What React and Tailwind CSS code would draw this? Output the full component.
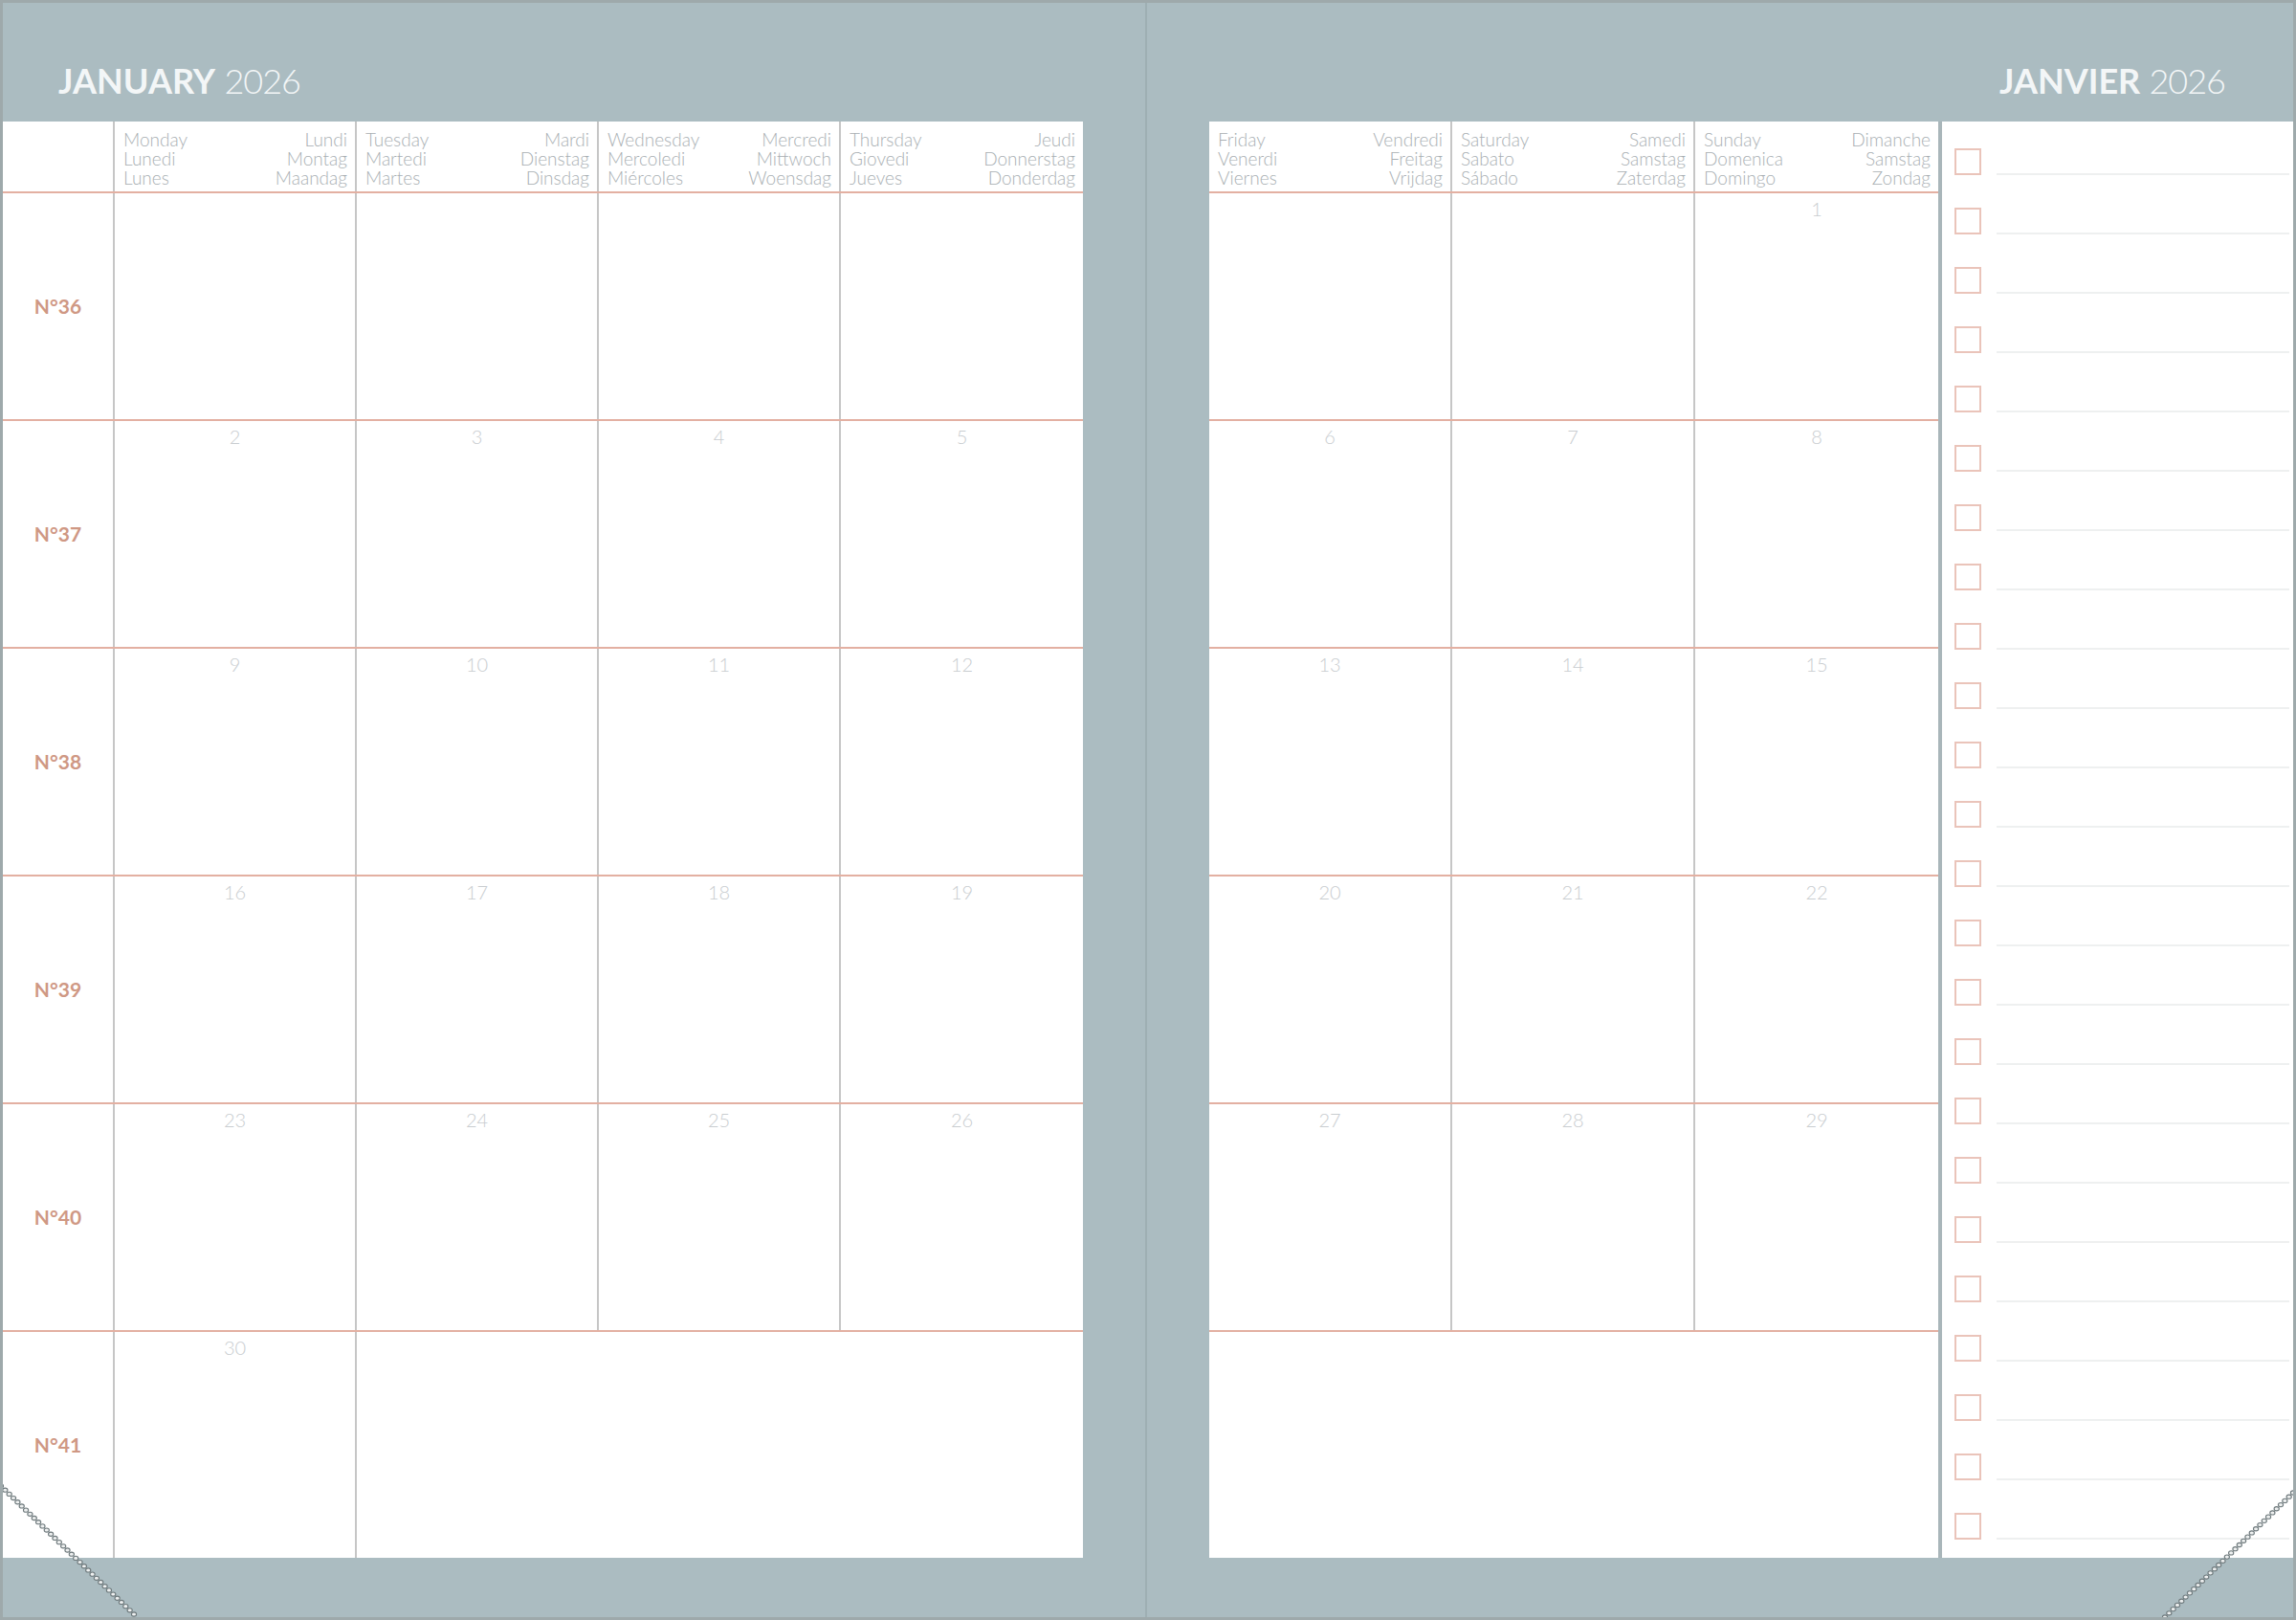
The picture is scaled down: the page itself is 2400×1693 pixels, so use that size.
import React from "react";

const leftDays = [
  { l: ["Monday", "Lunedi", "Lunes"], r: ["Lundi", "Montag", "Maandag"] },
  { l: ["Tuesday", "Martedi", "Martes"], r: ["Mardi", "Dienstag", "Dinsdag"] },
  { l: ["Wednesday", "Mercoledi", "Miércoles"], r: ["Mercredi", "Mittwoch", "Woensdag"] },
  { l: ["Thursday", "Giovedi", "Jueves"], r: ["Jeudi", "Donnerstag", "Donderdag"] },
];
const rightDays = [
  { l: ["Friday", "Venerdi", "Viernes"], r: ["Vendredi", "Freitag", "Vrijdag"] },
  { l: ["Saturday", "Sabato", "Sábado"], r: ["Samedi", "Samstag", "Zaterdag"] },
  { l: ["Sunday", "Domenica", "Domingo"], r: ["Dimanche", "Samstag", "Zondag"] },
];

const weeks = ["N°36", "N°37", "N°38", "N°39", "N°40", "N°41"];
const leftNums = [
  [null, null, null, null],
  [2, 3, 4, 5],
  [9, 10, 11, 12],
  [16, 17, 18, 19],
  [23, 24, 25, 26],
  [30, null, null, null],
];
const rightNums = [
  [null, null, 1],
  [6, 7, 8],
  [13, 14, 15],
  [20, 21, 22],
  [27, 28, 29],
  [null, null, null],
];

const VLINE = "border-r-2 border-[#c6c6c6]";
const HLINE = "border-b-2 border-[#e3b0a2]";

function DayHead({ d, w, border }) {
  return (
    <div
      className={`${w} h-full flex justify-between pl-[9px] pr-[8px] pt-[9px] text-[19px] leading-[20px] font-light text-[#a9afb3] ${border ? VLINE : ""}`}
    >
      <div className="flex flex-col">
        {d.l.map((t) => (
          <span key={t}>{t}</span>
        ))}
      </div>
      <div className="flex flex-col items-end">
        {d.r.map((t) => (
          <span key={t}>{t}</span>
        ))}
      </div>
    </div>
  );
}

function DayCell({ n, w, border }) {
  return (
    <div className={`${w} h-full flex justify-center pt-[6px] ${border ? VLINE : ""}`}>
      {n != null && (
        <span className="text-[20px] leading-[20px] font-light text-[#c9cdd0]">{n}</span>
      )}
    </div>
  );
}

function Chain({ x1, y1, x2, y2 }) {
  const len = Math.hypot(x2 - x1, y2 - y1);
  const n = Math.floor(len / 6);
  const pts = [];
  for (let i = 0; i <= n; i++) {
    const t = i / n;
    pts.push([x1 + (x2 - x1) * t, y1 + (y2 - y1) * t]);
  }
  return pts.map(([x, y], i) => (
    <ellipse key={i} cx={x} cy={y} rx="2.6" ry="2.1" fill="#eef0f0" stroke="#6f7a7d" strokeWidth="1.1" />
  ));
}

export default function App() {
  return (
    <div className="w-[2400px] h-[1693px] bg-[#abbcc1] border-[3px] border-[#9ea9ab] flex relative overflow-hidden font-['Lato',sans-serif]">
      {/* LEFT PAGE */}
      <div className="w-[1129px] flex flex-col">
        <div className="h-[124px] pl-[58px] pt-[63px]">
          <div className="text-[36px] leading-[36px] text-[#f3f6f7]">
            <span className="font-bold">JANUARY</span>{" "}
            <span className="font-light tracking-[-1px]">2026</span>
          </div>
        </div>
        <div className="flex-1 bg-white flex flex-col">
          <div className={`h-[75px] flex ${HLINE}`}>
            <div className={`w-[117px] h-full ${VLINE}`} />
            {leftDays.map((d, i) => (
              <DayHead key={i} d={d} w="w-[253px]" border={i < 3} />
            ))}
          </div>
          {weeks.map((wk, r) => (
            <div key={wk} className={`${r < 5 ? `h-[238px] ${HLINE}` : "flex-1"} flex`}>
              <div className={`w-[117px] h-full flex items-center justify-center ${VLINE}`}>
                <span className="text-[21px] font-bold text-[#cf9884]">{wk}</span>
              </div>
              {leftNums[r].map((n, i) => (
                <DayCell
                  key={i}
                  n={n}
                  w="w-[253px]"
                  border={r < 5 ? i < 3 : i === 0}
                />
              ))}
            </div>
          ))}
        </div>
        <div className="h-[62px]" />
      </div>

      {/* GUTTER */}
      <div className="w-[132px] flex justify-center">
        <div className="w-[2px] bg-[#9eafb3]" />
      </div>

      {/* RIGHT PAGE */}
      <div className="w-[1133px] flex flex-col">
        <div className="h-[124px] pr-[71px] pt-[63px] flex justify-end">
          <div className="text-[36px] leading-[36px] text-[#f3f6f7]">
            <span className="font-bold">JANVIER</span>{" "}
            <span className="font-light tracking-[-1px]">2026</span>
          </div>
        </div>
        <div className="flex-1 bg-white flex">
          <div className="w-[762px] flex flex-col">
            <div className={`h-[75px] flex ${HLINE}`}>
              {rightDays.map((d, i) => (
                <DayHead key={i} d={d} w="w-[254px]" border={i < 2} />
              ))}
            </div>
            {rightNums.map((row, r) => (
              <div key={r} className={`${r < 5 ? `h-[238px] ${HLINE}` : "flex-1"} flex`}>
                {row.map((n, i) => (
                  <DayCell key={i} n={n} w="w-[254px]" border={r < 5 && i < 2} />
                ))}
              </div>
            ))}
          </div>
          <div className="w-[4px] bg-[#a9b6ba]" />
          <div className="w-[367px] flex flex-col gap-[34px] pt-[28px] pl-[13px] pr-[4px]">
            {Array.from({ length: 24 }).map((_, i) => (
              <div key={i} className="h-[28px] flex items-end gap-[16px]">
                <div className="w-[28px] h-[28px] border-2 border-[#eac4ba] shrink-0" />
                <div className="flex-1 h-[2px] bg-[#eef0f0]" />
              </div>
            ))}
          </div>
        </div>
        <div className="h-[62px]" />
      </div>

      {/* elastic band stitches */}
      <svg className="absolute left-0 top-0 pointer-events-none" width="2394" height="1687">
        <Chain x1={-2} y1={1550} x2={137} y2={1684} />
        <Chain x1={2394} y1={1557} x2={2260} y2={1687} />
      </svg>
    </div>
  );
}
